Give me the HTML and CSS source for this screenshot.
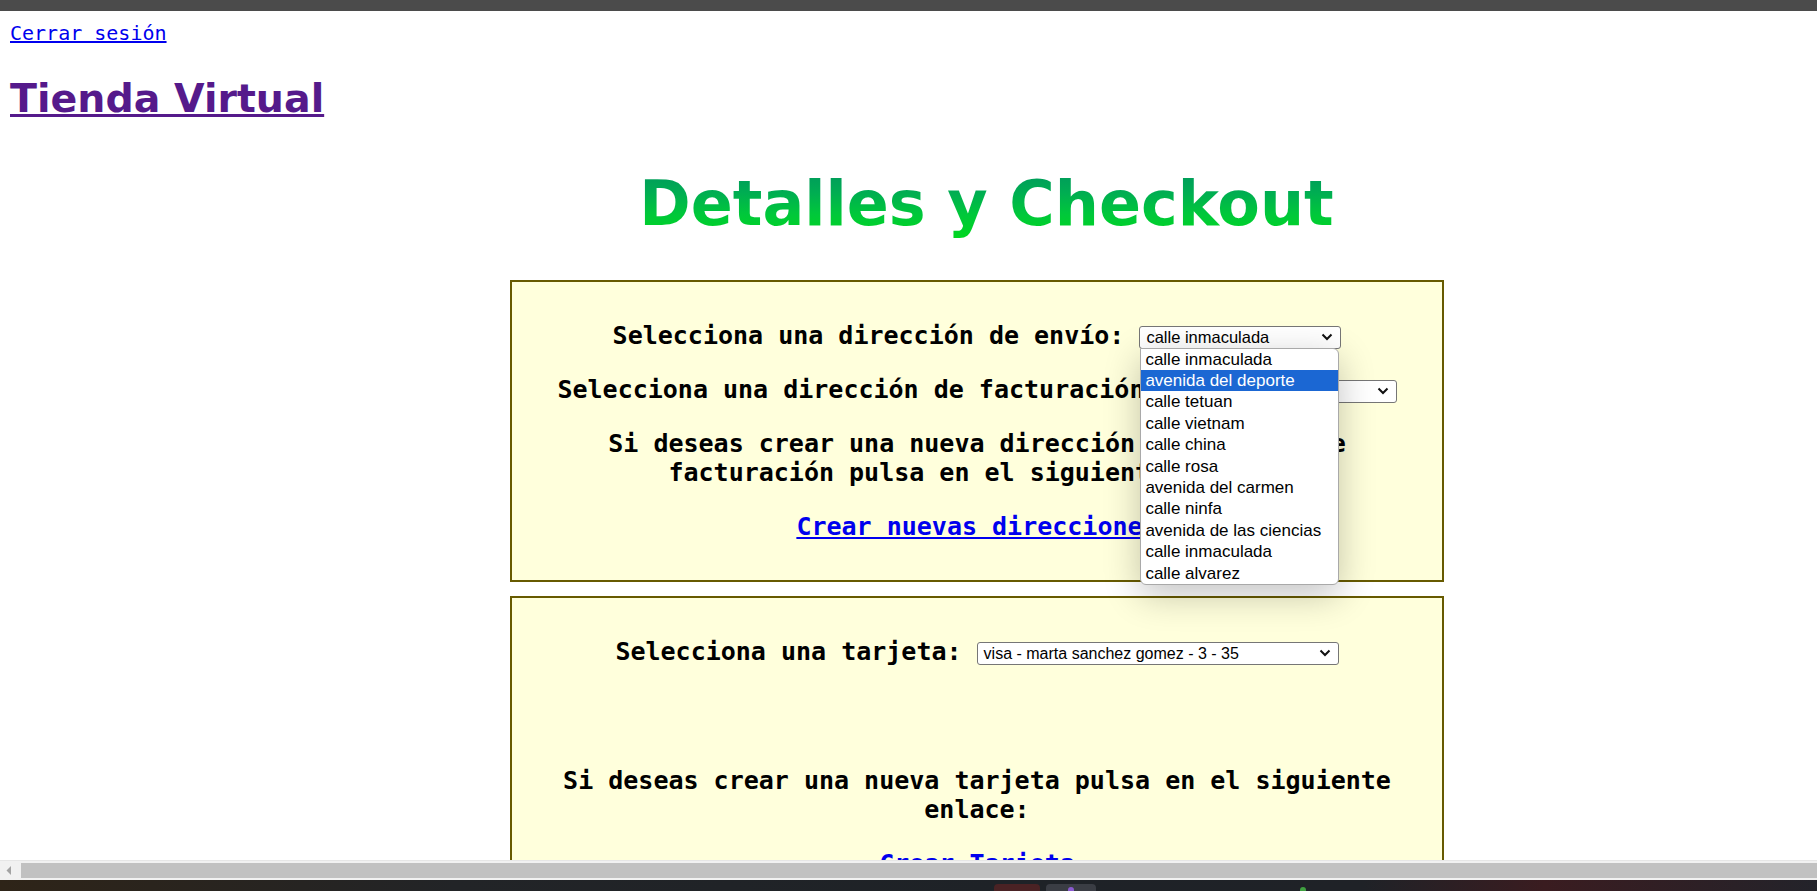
FILE: index.html
```
<!DOCTYPE html>
<html lang="es">
<head>
<meta charset="utf-8">
<title>Detalles y Checkout</title>
<link rel="stylesheet" href="styles.css">
</head>
<body>
<div class="window-top"></div>
<div class="viewport">
  <div class="top-links"><a class="logout" href="#">Cerrar sesión</a></div>
  <h1 class="store"><a href="#">Tienda Virtual</a></h1>
  <div class="checkout">
    <h2 class="title"><span>Detalles y Checkout</span></h2>
    <div class="panel">
      <div class="line field">Selecciona una dirección de envío: <span class="select-wrap"><span class="select w-envio"><span class="select-text">calle inmaculada</span><svg class="chev" width="12" height="8" viewBox="0 0 12 8"><path d="M1.5 1.5 L6 6 L10.5 1.5" fill="none" stroke="#111" stroke-width="2"/></svg></span><span class="dropdown">
            <span class="opt">calle inmaculada</span>
            <span class="opt active">avenida del deporte</span>
            <span class="opt">calle tetuan</span>
            <span class="opt">calle vietnam</span>
            <span class="opt">calle china</span>
            <span class="opt">calle rosa</span>
            <span class="opt">avenida del carmen</span>
            <span class="opt">calle ninfa</span>
            <span class="opt">avenida de las ciencias</span>
            <span class="opt">calle inmaculada</span>
            <span class="opt">calle alvarez</span>
          </span></span></div>
      <div class="line field">Selecciona una dirección de facturación: <span class="select-wrap"><span class="select w-fact"><span class="select-text">calle inmaculada</span><svg class="chev" width="12" height="8" viewBox="0 0 12 8"><path d="M1.5 1.5 L6 6 L10.5 1.5" fill="none" stroke="#111" stroke-width="2"/></svg></span></span></div>
      <div class="line note">Si deseas crear una nueva dirección de envío o de facturación pulsa en el siguiente enlace:</div>
      <div class="line link"><a href="#">Crear nuevas direcciones</a></div>
    </div>
    <div class="panel">
      <div class="line field">Selecciona una tarjeta: <span class="select-wrap"><span class="select w-card"><span class="select-text">visa - marta sanchez gomez - 3 - 35</span><svg class="chev" width="12" height="8" viewBox="0 0 12 8"><path d="M1.5 1.5 L6 6 L10.5 1.5" fill="none" stroke="#111" stroke-width="2"/></svg></span></span></div>
      <div class="line note spaced">Si deseas crear una nueva tarjeta pulsa en el siguiente enlace:</div>
      <div class="line link"><a href="#">Crear Tarjeta</a></div>
    </div>
  </div>
</div>
<div class="hscroll">
  <span class="arrow"><svg width="6" height="9" viewBox="0 0 6 9"><path d="M5 0 L0.5 4.5 L5 9 Z" fill="#a3a3a3"/></svg></span>
  <span class="thumb"></span>
</div>
<div class="taskbar">
  <span class="tb-app tb-red"></span>
  <span class="tb-app tb-dark"><span class="tb-dot"></span></span>
  <span class="tb-green"></span>
</div>
</body>
</html>
```
FILE: styles.css
```
* { box-sizing: border-box; }

html, body {
  margin: 0;
  padding: 0;
}

body {
  height: 891px;
  display: flex;
  flex-direction: column;
  overflow: hidden;
  background: #fff;
  color: #000;
  font-family: "DejaVu Sans Mono", "Liberation Mono", monospace;
}

.window-top {
  flex: none;
  height: 11px;
  background: #4b4b4b;
}

.viewport {
  flex: 1;
  min-height: 0;
  overflow: hidden;
  padding: 11px 8px 0 10px;
}

.top-links {
  font-size: 20px;
  line-height: 23px;
}

.logout {
  color: #0000ee;
}

.store {
  margin: 30px 0 0;
  font-family: "DejaVu Sans", Verdana, sans-serif;
  font-weight: bold;
  font-size: 39.5px;
  line-height: 46px;
}

.store a {
  color: #551a8b;
}

.checkout {
  margin-left: 500px;
  width: 934px;
}

.title {
  margin: 46px 0 40px;
  padding-left: 19px;
  text-align: center;
  font-family: "DejaVu Sans", Verdana, sans-serif;
  font-weight: bold;
  font-size: 62px;
  line-height: 73px;
}

.title span {
  display: inline-block;
  background: linear-gradient(to bottom, #00955f 0%, #00ad52 35%, #00c83a 65%, #00d81c 100%);
  -webkit-background-clip: text;
  background-clip: text;
  color: transparent;
}

.panel {
  border: 2px solid #675a00;
  background: #ffffdc;
  padding: 14px 30px;
  margin-bottom: 14px;
  text-align: center;
}

.panel .line {
  margin: 25px 0;
  font-weight: bold;
  font-size: 25px;
  line-height: 29px;
}

.panel .line.spaced {
  margin-top: 100px;
}

.panel a {
  color: #0000ee;
}

.select-wrap {
  position: relative;
  display: inline-block;
  vertical-align: middle;
  line-height: 0;
}

.select {
  display: inline-flex;
  align-items: center;
  justify-content: space-between;
  height: 23px;
  padding: 0 7px 0 6px;
  border: 1px solid #767676;
  border-radius: 3px;
  background: #fff;
  font-family: "Liberation Sans", Arial, sans-serif;
  font-weight: normal;
  font-size: 16.5px;
  line-height: 21px;
  color: #000;
  text-align: left;
  white-space: nowrap;
}

.w-card {
  font-size: 16px;
}

.w-envio { width: 202px; }
.w-fact { width: 222px; }
.w-card { width: 362px; }

.chev {
  flex: none;
}

.dropdown {
  position: absolute;
  z-index: 10;
  top: 100%;
  margin-top: -1px;
  left: 1px;
  width: 199px;
  display: flex;
  flex-direction: column;
  background: #fff;
  border: 1px solid #a9a9a9;
  border-radius: 0 6px 6px 6px;
  box-shadow: 0 10px 36px rgba(0, 0, 0, 0.24);
  overflow: hidden;
  font-family: "Liberation Sans", Arial, sans-serif;
  font-weight: normal;
  font-size: 17px;
  line-height: 21.4px;
  text-align: left;
  color: #000;
}

.dropdown .opt {
  display: block;
  padding-left: 4px;
  white-space: nowrap;
}

.dropdown .opt.active {
  background: #1b67d3;
  color: #fff;
}

.hscroll {
  flex: none;
  height: 20px;
  display: flex;
  align-items: center;
  background: #f1f1f1;
  border-top: 1px solid #e6e6e6;
}

.hscroll .arrow {
  flex: none;
  width: 17px;
  display: flex;
  align-items: center;
  justify-content: center;
}

.hscroll .thumb {
  flex: 1;
  height: 15px;
  margin-left: 4px;
  background: #c1c1c1;
}

.taskbar {
  flex: none;
  height: 11px;
  display: flex;
  align-items: flex-end;
  background: linear-gradient(90deg, #2e2418 0%, #222427 25%, #1e2227 55%, #1f2227 75%, #3a1c20 85%, #23232a 100%);
}

.tb-app {
  display: block;
  height: 7px;
  border-radius: 4px 4px 0 0;
}

.tb-red {
  width: 46px;
  margin-left: 994px;
  background: #4a2224;
}

.tb-dark {
  width: 50px;
  margin-left: 6px;
  background: #3a3d44;
  display: flex;
  justify-content: center;
  padding-top: 3px;
}

.tb-dot {
  width: 6px;
  height: 4px;
  border-radius: 3px 3px 0 0;
  background: #8a5ad0;
}

.tb-green {
  display: block;
  width: 6px;
  height: 4px;
  margin-left: 204px;
  border-radius: 3px 3px 0 0;
  background: #3fa040;
}
```
